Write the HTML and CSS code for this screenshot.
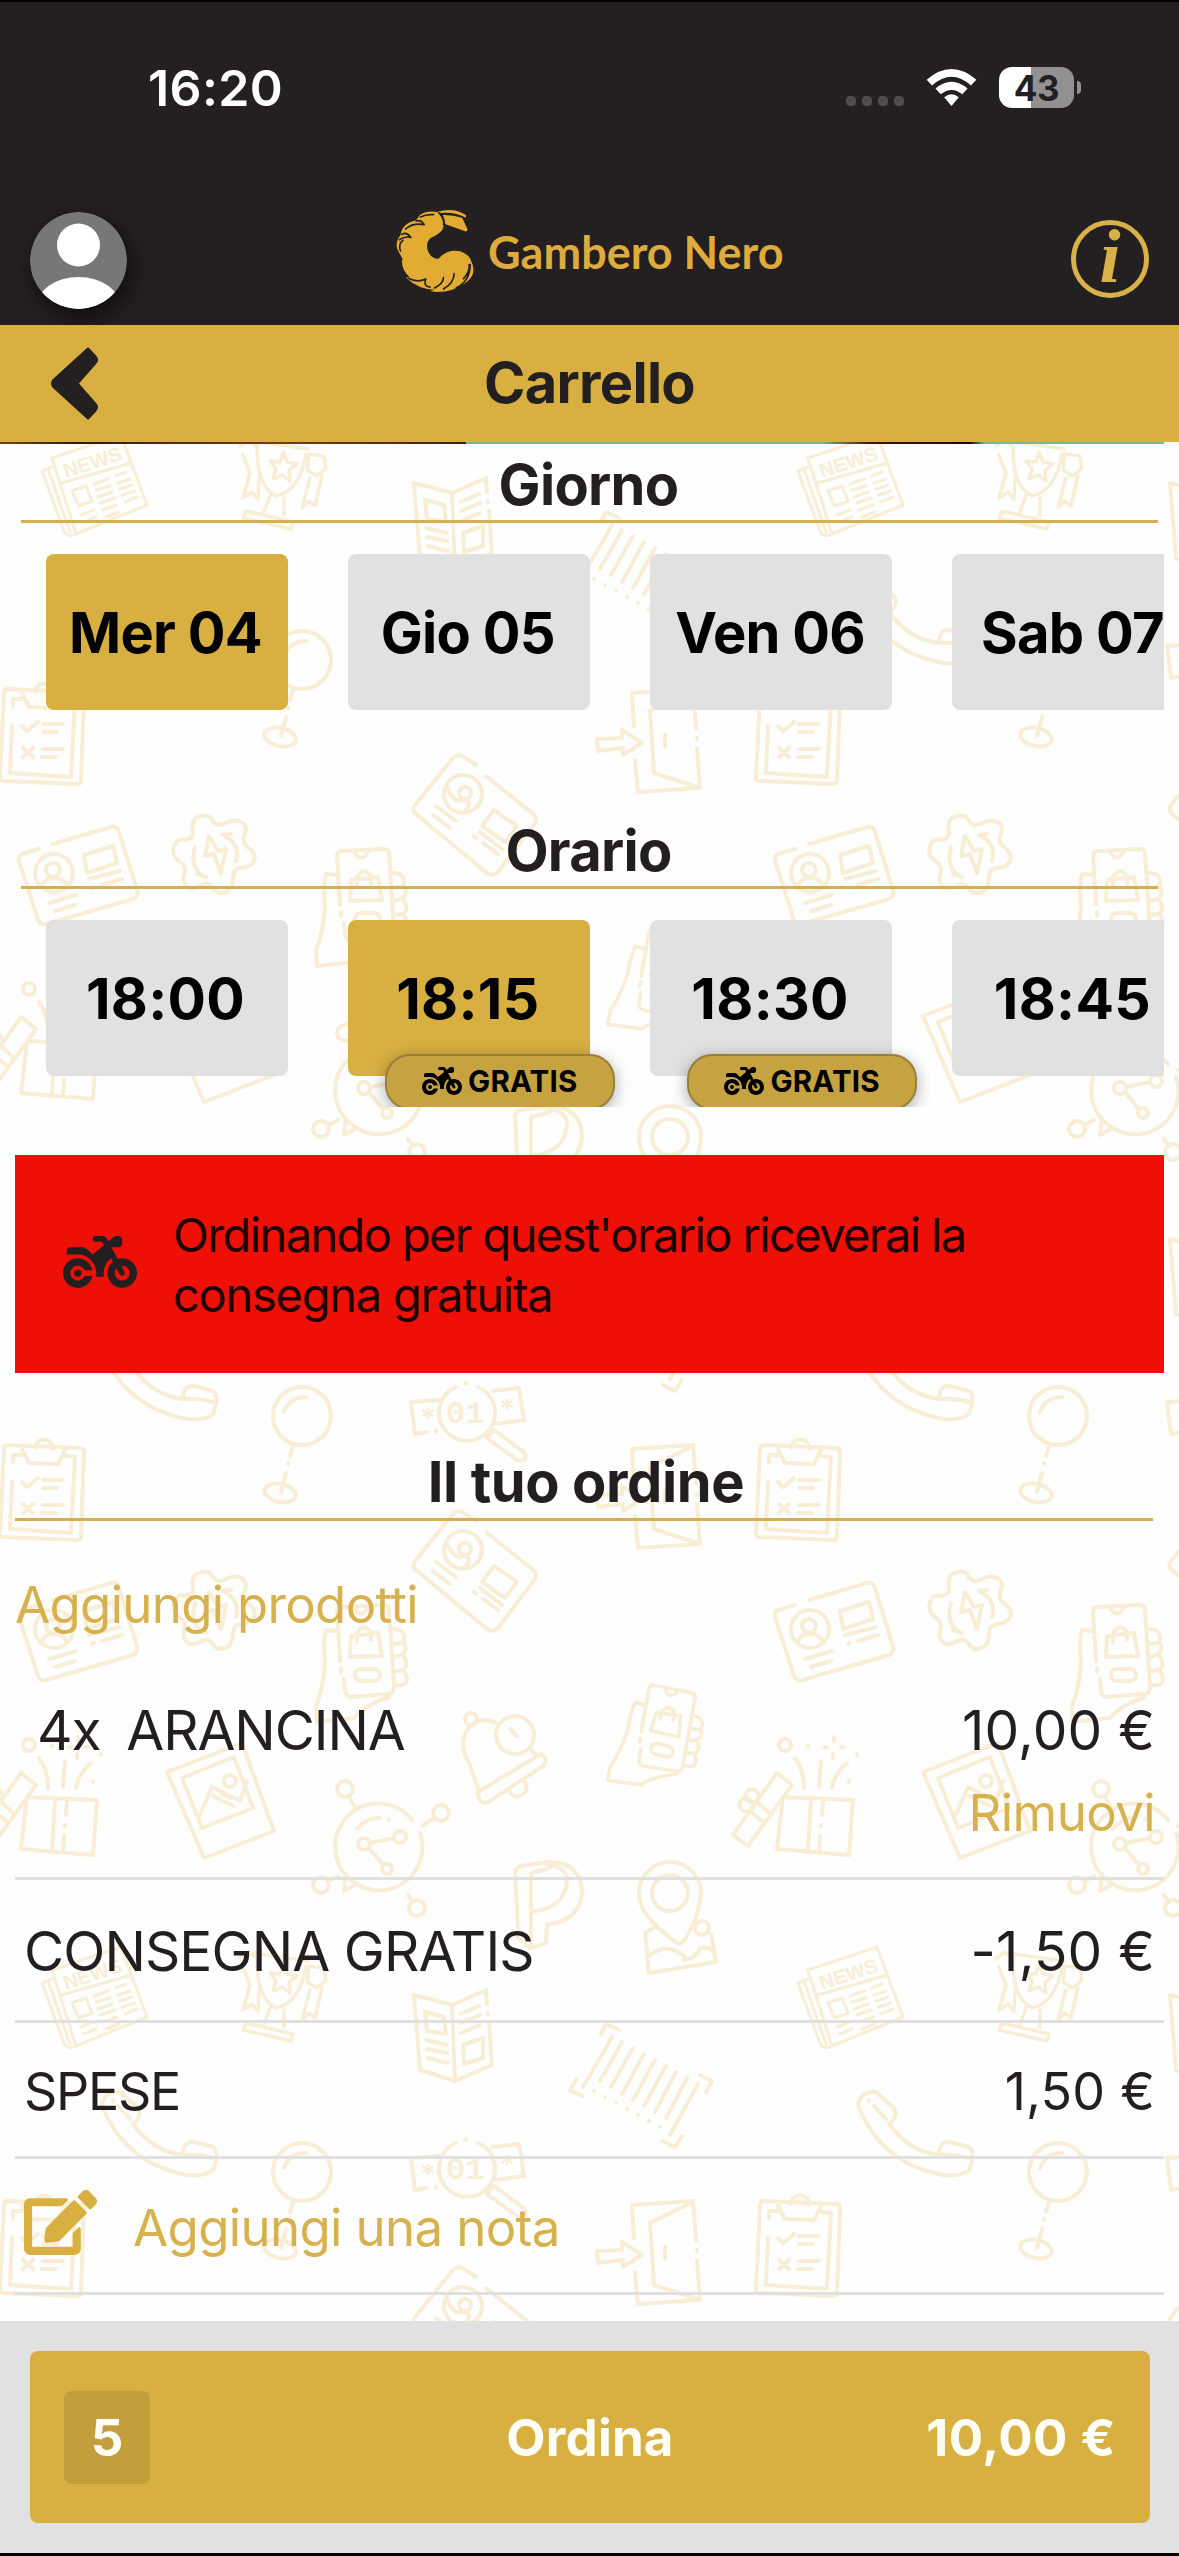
FILE: index.html
```html
<!DOCTYPE html>
<html lang="it">
<head>
<meta charset="utf-8">
<title>Gambero Nero - Carrello</title>
<link rel="stylesheet" href="styles.css">
</head>
<body>
<svg class="defs" width="0" height="0" aria-hidden="true">
  <defs>
    <symbol id="moto" viewBox="0 32 640 448"><path d="M280 32c-13.300 0-24 10.700-24 24s10.700 24 24 24h57.700l16.400 30.300L256 192l-45.300-45.300c-12-12-28.300-18.700-45.300-18.700H64c-17.700 0-32 14.300-32 32v32h96c88.400 0 160 71.600 160 160c0 11-1.100 21.700-3.200 32h70.400c-2.100-10.300-3.200-21-3.200-32c0-52.200 25-98.600 63.700-127.800l15.400 28.600C402.400 276.300 384 312 384 352c0 70.700 57.300 128 128 128s128-57.300 128-128s-57.300-128-128-128c-13.500 0-26.500 2.100-38.700 6L418.200 128H480c17.700 0 32-14.300 32-32V64c0-17.700-14.300-32-32-32H459.600c-7.500 0-14.700 2.600-20.500 7.400L391.700 78.900l-14-26c-7-12.900-20.500-21-35.200-21H280zM462.700 311.200l28.200 52.200c6.300 11.700 20.900 16 32.500 9.700s16-20.900 9.700-32.500l-28.200-52.200c2.300-.3 4.700-.4 7.100-.4c35.300 0 64 28.700 64 64s-28.700 64-64 64s-64-28.700-64-64c0-15.500 5.500-29.700 14.700-40.800zM187.300 376c-9.500 23.500-32.500 40-59.300 40c-35.300 0-64-28.700-64-64s28.700-64 64-64c26.900 0 49.900 16.500 59.300 40h66.400C242.500 268.800 190.500 224 128 224C57.300 224 0 281.300 0 352s57.300 128 128 128c62.500 0 114.500-44.800 125.800-104H187.300zM128 384a32 32 0 1 0 0-64 32 32 0 1 0 0 64z"/></symbol>
  </defs>
</svg>
<div class="app">
  <header class="top">
    <div class="status">
      <span class="time">16:20</span>
      <div class="status-icons">
        <span class="dots"><i></i><i></i><i></i><i></i></span>
        <svg class="wifi" viewBox="0 0 51 38"><path fill="#fff" d="M0 11Q25.500-11 51 11L45.500 17Q25.500-1 5.500 17ZM9 20Q25.500 6 42 20L36.500 26Q25.500 17 14.500 26ZM18 29Q25.500 23 33 29L25.500 38Z"/></svg>
        <span class="battery">43</span>
        <i class="tip"></i>
      </div>
    </div>
    <div class="brand-row">
      <svg class="avatar" viewBox="0 0 97 97"><defs><clipPath id="av"><circle cx="48.500" cy="48.500" r="48.500"/></clipPath></defs><g clip-path="url(#av)"><rect width="97" height="97" fill="#777"/><circle cx="48.500" cy="33" r="21.500" fill="#fff"/><ellipse cx="48.500" cy="95" rx="42" ry="30" fill="#fff"/></g></svg>
      <div class="logo">
        <svg class="shrimp" viewBox="45 55 245 255">
          <g fill="#e2ac33">
            <path d="M172 66Q222 52 258 77L257 84Q222 66 184 70Z"/>
            <path d="M188 76Q216 75 246 84L262 119Q262 127 255 125L196 104Q193 88 188 76Z"/>
            <path d="M119 76Q140 62 172 67Q198 96 187 120Q176 134 150 146Q134 163 145 188Q155 208 175 207Q203 176 240 185Q268 195 272 212Q292 250 262 275Q245 290 216 300Q180 312 150 304L163 300Q118 300 77 264L88 262Q60 235 67 207L54 184Q44 165 55 145L61 137Q65 101 108 92Z"/>
          </g>
          <g fill="none" stroke="#241f20" stroke-width="5" stroke-linecap="round">
            <path d="M121 82Q138 73 160 75M177 70Q194 86 190 105M76 118Q98 98 132 105M108 94Q122 89 132 105M58 150Q72 139 92 143M61 184Q54 163 68 152M65 134Q79 125 92 143M84 266Q112 280 137 268M163 295Q190 282 190 263M190 298Q221 280 222 252M229 294Q269 275 270 225M250 267Q269 248 267 225M136 271Q130 290 150 292"/>
          </g>
        </svg>
        <span class="logo-text">Gambero Nero</span>
      </div>
      <span class="info">i</span>
    </div>
  </header>
  <div class="title-bar">
    <svg class="back" viewBox="50 347 50 75"><path d="M88 350L95 357.500Q98 361 95 364L77 384.500L95 405Q98 408 95 411.500L88 419L54 388Q51 384.500 54 381Z" fill="#241f20" stroke="#241f20" stroke-width="3" stroke-linejoin="round"/></svg>
    <h1>Carrello</h1>
  </div>
  <main>
    <svg class="wallpaper" viewBox="0 442 1179 1879" aria-hidden="true">
      <defs>
        <g id="hand">
          <path d="M1096 1661L1093 1612Q1093 1607 1098 1607L1140 1605Q1145 1605 1145 1610L1150 1686Q1150 1694 1144 1694L1107 1697Q1102 1697 1101 1690L1100 1679M1097 1668v4M1110 1607Q1117 1621 1125 1606M1107 1636L1134 1633L1138 1656L1106 1657ZM1113 1642V1633Q1120 1622 1127 1632V1640M1093 1631L1082 1630Q1079 1640 1081 1663Q1079 1690 1072 1706L1073 1722L1110 1718Q1120 1706 1145 1697"/>
          <rect x="1111" y="1669" width="25" height="12" rx="6"/>
          <path d="M1147 1629Q1161 1628 1160 1640Q1157 1645 1149 1643M1160 1642Q1166 1655 1149 1657M1160 1657Q1168 1671 1150 1671M1160 1671Q1169 1687 1151 1685"/>
        </g>
        <g id="motifs" fill="none" stroke="#f8eed6" stroke-width="4" stroke-linecap="round" stroke-linejoin="round">
          <path d="M7 1445L80 1448Q84 1448 84 1452L81 1537Q81 1540 77 1540L3 1537Q0 1537 0 1534L4 1449Q4 1445 7 1445M13 1462V1455L22 1455M66 1456L75 1457L71 1533L10 1529L12 1482M22 1449L29 1463L58 1464L65 1450M35 1448A9 9 0 0 1 53 1449M22 1482L27 1487L38 1478M43 1480H63M43 1488H57M23 1504L33 1513M33 1504L23 1513M43 1505H63M42 1513H56"/>
          <circle cx="302" cy="1416" r="29"/>
          <path d="M284 1412Q290 1397 306 1397M293 1446L290 1456M288 1463v1M286 1473L281 1492"/>
          <ellipse cx="280" cy="1493" rx="16" ry="9" transform="rotate(12 280 1493)"/>
          <path d="M456 1387A28 28 0 1 0 478 1387M466 1383v1M439 1400L411 1402L415 1434L427 1432M436 1431v1M493 1391L519 1388L524 1420L495 1424M487 1438L517 1460Q528 1463 525 1453L494 1430Z"/>
          <text x="446" y="1423" class="motif-num">01</text>
          <text x="421" y="1426" class="motif-star">*</text>
          <text x="500" y="1417" class="motif-star">*</text>
          <path d="M476 1521L464 1513Q458 1509 453 1514L415 1561Q411 1567 417 1571L487 1629Q493 1633 498 1628L535 1579Q538 1573 532 1569L486 1532M436 1562L456 1577M433 1571L450 1584M494 1566L517 1582L505 1598L482 1582ZM480 1588L502 1605M474 1592L476 1594M483 1599L498 1610M447 1544Q454 1560 464 1556Q474 1558 464 1568"/>
          <circle cx="463" cy="1550" r="19"/><circle cx="465" cy="1549" r="6"/>
          <path d="M795 1605L778 1610Q774 1612 775 1617L794 1676Q797 1682 802 1680L889 1655Q895 1652 893 1646L875 1588Q873 1581 867 1583L809 1600M840 1611L869 1602L873 1619L843 1629ZM845 1635L876 1627M848 1644L850 1643M858 1641L878 1635M805 1659L832 1651M811 1667L831 1661M797 1643Q801 1633 811 1634Q820 1634 823 1642"/>
          <circle cx="810" cy="1629" r="19"/><circle cx="809" cy="1626" r="7"/>
          <path d="M952 1574Q965 1568 969 1577Q973 1583 980 1580Q992 1573 1000 1580Q1004 1585 1000 1592Q998 1600 1005 1604Q1014 1611 1009 1619Q1005 1624 996 1624Q988 1626 989 1636Q987 1649 977 1649Q971 1649 968 1643Q963 1637 956 1642Q946 1647 941 1640Q938 1635 941 1628Q942 1621 935 1617Q926 1610 931 1600Q934 1594 941 1596Q950 1595 949 1587Q947 1579 952 1574ZM965 1592L961 1612L970 1610L977 1629L982 1605L974 1607ZM951 1603Q945 1624 961 1633M953 1630L962 1633M979 1591Q997 1600 992 1617M979 1591L987 1590"/>
          <use href="#hand"/>
          <use href="#hand" transform="translate(666 1729) rotate(14) scale(.9) translate(-1122 -1651)"/>
          <path d="M783 1797L853 1800L849 1855L777 1849ZM811 1799L808 1851M823 1801L822 1815M821 1825v1M820 1836L819 1852M777 1773L792 1785L748 1846L733 1835ZM757 1802L769 1813M750 1811L762 1821M795 1758Q804 1770 804 1788M821 1761L819 1787M847 1763Q834 1774 832 1788M808 1745v1M857 1754v1M849 1781v1M834 1737v4M833 1754v4M824 1747h3M841 1747h3"/>
          <circle cx="785" cy="1745" r="6"/><circle cx="752" cy="1796" r="6.500"/><circle cx="746" cy="1805" r="6.500"/>
          <path d="M167 1772L242 1743L274 1831L204 1858ZM182 1778L234 1757L253 1808L202 1828ZM199 1817L212 1787L240 1801L247 1781M213 1796L234 1806M222 1794L231 1798"/>
          <circle cx="230" cy="1781" r="6"/>
          <path d="M412 1820A43 43 0 1 0 357 1884L344 1891L346 1874M420 1833A43 43 0 0 1 357 1884M357 1829Q367 1817 380 1818M389 1819v1M370 1843L394 1838M369 1848L383 1865M348 1796L356 1808M434 1818L422 1826M329 1881L338 1876M408 1895L413 1902"/>
          <circle cx="364" cy="1844" r="6"/><circle cx="400" cy="1837" r="6"/><circle cx="387" cy="1869" r="5"/><circle cx="345" cy="1789" r="8"/><circle cx="441" cy="1813" r="8"/><circle cx="321" cy="1885" r="8"/><circle cx="417" cy="1908" r="8"/>
          <path d="M497 1723Q478 1715 467 1730Q458 1745 469 1763L478 1788M530 1749L538 1756M478 1792L541 1754Q549 1758 543 1766L487 1803Q478 1804 478 1792M509 1791Q516 1802 526 1791Q528 1785 524 1780M510 1729L517 1736"/>
          <circle cx="515" cy="1735" r="19"/><circle cx="471" cy="1719" r="6"/>
          <path d="M518 1930L515 1872Q515 1867 521 1866L547 1862Q582 1862 582 1893Q580 1920 547 1925L546 1943L531 1948L531 1873L550 1868M531 1912Q566 1908 567 1880Q566 1866 545 1864M530 1948L516 1936"/>
          <path d="M677 1943Q638 1915 639 1893A31 31 0 0 1 701 1893Q700 1915 686 1938Q682 1945 677 1943M655 1927L645 1933L649 1973L716 1962L711 1934M647 1958Q665 1940 685 1957M683 1960Q697 1958 700 1948Q710 1946 715 1955"/>
          <circle cx="670" cy="1893" r="18"/><circle cx="702" cy="1928" r="7"/>
          <g transform="translate(0 -756)">
            <path stroke-width="3" d="M808 1970L877 1947L903 2017L832 2046ZM808 1979L798 1983L820 2043Q823 2050 832 2046M804 1981L826 2044M818 1995L887 1975M828 2003L842 1998L848 2013L835 2018ZM850 1996L864 1991M852 2002L866 1998M854 2009L868 2004M857 2015L871 2010M837 2027L850 2022M840 2034L852 2029M859 2022L873 2017M862 2029L875 2024M872 1988L882 1984M874 1995L886 1991M876 2001L888 1997M878 2007L891 2003M881 2014L893 2009"/>
            <text x="822" y="1990" transform="rotate(-18 822 1990)" class="motif-news">NEWS</text>
            <path stroke-width="3.500" d="M257 1957Q256 1998 276 2008Q300 2003 306 1966M252 1953L308 1961M283 1964L287 1974L297 1976L289 1982L290 1993L282 1987L273 1991L276 1981L270 1973L280 1974ZM270 2008L264 2024M284 2010L284 2027M246 2023L293 2034L291 2041L243 2030ZM243 1967L250 1985L243 2010L252 2004L258 2011L259 1990M240 1958L249 1952L258 1960M324 1968L309 1966L307 1982L317 1988L326 1980ZM310 1990L302 2020L309 2013L315 2018L322 1988"/>
            <path d="M414 1995L452 2005L486 1990L487 2004M488 2013v1M489 2023L492 2065L455 2081L420 2070L414 1995M452 2005L455 2081M425 2012L444 2017L446 2034L427 2031ZM426 2040L447 2045M427 2049L447 2053M428 2058L448 2063M461 2014L479 2006M461 2023L480 2015M461 2033L480 2025M463 2045L483 2038V2058L464 2064Z"/>
            <path d="M612 2037L583 2087M622 2042L600 2081M633 2048L611 2087M644 2054L622 2094M655 2060L633 2100M666 2066L644 2106M676 2072L655 2112M687 2078L666 2118M698 2084L670 2135M601 2034L606 2024L619 2030M576 2080L570 2090L582 2096M700 2075L712 2081L706 2092M682 2136L675 2147L663 2141"/>
            <path stroke-dasharray="0.100 12.400" d="M594 2091L662 2128"/>
            <path d="M858 2105Q860 2091 876 2092L894 2108Q899 2116 889 2124Q908 2151 939 2155Q939 2141 950 2142L969 2147Q976 2152 969 2170Q960 2177 943 2175Q880 2163 858 2105M874 2106L886 2119M869 2100v1M940 2155Q955 2154 969 2158"/>
            <path d="M634 2238L632 2205L693 2201L696 2240M697 2250v1M697 2260L700 2300L638 2304L635 2272M693 2202L650 2223L654 2285L700 2300M665 2247V2259M597 2251L622 2250V2242L642 2255L623 2267V2260L598 2263Z"/>
          </g>
        </g>
        <g id="motif-row"><use href="#motifs" x="-756"/><use href="#motifs"/><use href="#motifs" x="756"/></g>
      </defs>
      <use href="#motif-row" y="-756"/><use href="#motif-row"/><use href="#motif-row" y="756"/>
    </svg>
    <div class="banner-edge"></div>
    <section class="slots">
      <h2>Giorno</h2>
      <div class="scroller">
        <div class="slot on">Mer 04</div>
        <div class="slot">Gio 05</div>
        <div class="slot">Ven 06</div>
        <div class="slot">Sab 07</div>
      </div>
    </section>
    <section class="slots hours">
      <h2>Orario</h2>
      <div class="scroller">
        <div class="slot">18:00</div>
        <div class="slot on">18:15<span class="free"><svg><use href="#moto"/></svg>GRATIS</span></div>
        <div class="slot">18:30<span class="free"><svg><use href="#moto"/></svg>GRATIS</span></div>
        <div class="slot">18:45</div>
      </div>
    </section>
    <div class="notice">
      <svg><use href="#moto"/></svg>
      <p>Ordinando per quest'orario riceverai la<br><span class="second">consegna gratuita</span></p>
    </div>
    <section class="order">
      <h2>Il tuo ordine</h2>
      <a class="add">Aggiungi prodotti</a>
      <div class="item">
        <div class="line"><span class="name"><span class="qty">4x</span><span>ARANCINA</span></span><span class="amount">10,00 €</span></div>
        <a class="remove">Rimuovi</a>
      </div>
      <div class="row delivery"><span class="name">CONSEGNA GRATIS</span><span class="amount">-1,50 €</span></div>
      <div class="row fees"><span class="name">SPESE</span><span class="amount">1,50 €</span></div>
      <div class="row note">
        <svg viewBox="0 0 576 512"><path d="M402.600 83.200l90.200 90.200c3.800 3.800 3.800 10 0 13.800L274.400 405.600l-92.800 10.300c-12.400 1.400-22.900-9.100-21.500-21.500l10.300-92.800L388.800 83.200c3.800-3.800 10-3.800 13.800 0zm162-22.900l-48.800-48.800c-15.200-15.200-39.900-15.200-55.200 0l-35.400 35.400c-3.800 3.800-3.800 10 0 13.800l90.200 90.200c3.800 3.800 10 3.800 13.800 0l35.400-35.400c15.200-15.300 15.200-40 0-55.200zM384 346.200V448H64V128h229.800c3.200 0 6.200-1.300 8.500-3.500l40-40c7.600-7.600 2.200-20.500-8.500-20.500H48C21.500 64 0 85.500 0 112v352c0 26.500 21.500 48 48 48h352c26.500 0 48-21.500 48-48V306.200c0-10.700-12.900-16-20.500-8.500l-40 40c-2.200 2.300-3.500 5.300-3.500 8.500z"/></svg>
        <span>Aggiungi una nota</span>
      </div>
    </section>
  </main>
  <footer>
    <div class="checkout">
      <span class="count">5</span>
      <span class="label">Ordina</span>
      <span class="total">10,00 €</span>
    </div>
  </footer>
</div>
</body>
</html>
```
FILE: styles.css
```css
* { box-sizing: border-box; margin: 0; padding: 0; }
body { width: 1179px; height: 2556px; overflow: hidden; background: #fff; font-family: Inter, "Liberation Sans", sans-serif; color: #231f20; }
.defs { position: absolute; }
.app { display: flex; flex-direction: column; width: 1179px; height: 2556px; }

.top { height: 325px; background: #241f20; border-top: 2px solid #000; }
.status { height: 170px; padding: 0 98px 0 148px; display: flex; justify-content: space-between; }
.time { color: #fff; font-size: 50px; font-weight: 600; line-height: 60px; margin-top: 56px; letter-spacing: .4px; }
.status-icons { display: flex; align-items: flex-start; padding-top: 65px; }
.dots { display: flex; gap: 6px; padding-top: 29px; margin-right: 22px; }
.dots i { width: 10px; height: 10px; border-radius: 4px; background: #4f4c4c; }
.wifi { width: 51px; height: 37px; margin: 2px 22px 0 0; }
.battery { width: 75px; height: 41px; border-radius: 13px; background: linear-gradient(90deg, #fff 32px, #929091 32px); color: #241f20; font-size: 35px; font-weight: 700; line-height: 42px; text-align: center; letter-spacing: -.5px; }
.tip { width: 4px; height: 13px; margin: 14px 0 0 3px; border-radius: 0 4px 4px 0; background: #929091; }
.brand-row { height: 153px; display: flex; align-items: flex-start; padding-left: 30px; }
.avatar { width: 97px; height: 97px; margin-top: 40px; border-radius: 50%; box-shadow: 4px 8px 22px rgba(0, 0, 0, .6); }
.logo { display: flex; margin: 36px 0 0 268px; }
.shrimp { width: 82px; height: 85px; }
.logo-text { margin-left: 11px; width: 307px; font: 700 45px/60px Lato, sans-serif; color: #deab3e; margin-top: 14px; white-space: nowrap; }
.info { width: 78px; height: 78px; margin: 48px 0 0 276px; border: 5.500px solid #d8b14b; border-radius: 50%; color: #d8b14b; font: italic 700 76px/62px "Liberation Serif", serif; text-align: center; }

.title-bar { height: 117px; background: #d8b042; display: grid; grid-template-columns: 150px 1fr 150px; align-items: center; }
.back { width: 50px; height: 75px; margin-left: 50px; }
h1 { font-size: 56px; font-weight: 700; text-align: center; line-height: 70px; letter-spacing: -.700px; margin-top: -2px; }

main { flex: none; position: relative; height: 1879px; overflow: hidden; background: #fefefe; }
.wallpaper { position: absolute; left: 0; top: 0; width: 1179px; height: 1879px; }
.motif-num { font: 700 32px "Liberation Mono", monospace; fill: #f8eed6; stroke: none; }
.motif-star { font: 700 28px "Liberation Serif", serif; fill: #f8eed6; stroke: none; }
.motif-news { font: 700 20px "Liberation Sans", sans-serif; fill: #f8eed6; stroke: none; }
.banner-edge, .slots, .notice, .order { position: relative; }
.banner-edge { width: 1164px; height: 2px; background: linear-gradient(90deg, #6b4420 0, #2b1a10 80px, #7a3a1c 280px, #3a210f 466px, #76b5a4 466px, #76b5a4 820px, #40140c 870px, #200505 970px, #76b5a4 985px); }
h2 { height: 79px; padding-top: 7px; border-bottom: 3px solid #d3b052; font-size: 56px; font-weight: 700; line-height: 68px; text-align: center; letter-spacing: -.700px; }
.slots h2 { margin: 0 21px; padding-right: 2px; }
.scroller { display: flex; gap: 60.300px; margin: 31px 15px 0 0; padding-left: 45.500px; overflow: hidden; }
.slot { flex: none; position: relative; width: 242px; height: 156px; border-radius: 8px; background: #e1e1e1; color: #000; font-size: 56px; font-weight: 700; line-height: 158px; text-align: center; white-space: nowrap; letter-spacing: -.700px; text-indent: -2px; }
.slot.on, .checkout { background: #d8b042; }
.hours { margin-top: 99.500px; }
.hours .slot { font-size: 57px; letter-spacing: .3px; }
.hours .scroller { height: 187.500px; }
.free { position: absolute; left: 37px; top: 134px; width: 230px; height: 56px; display: flex; align-items: center; justify-content: center; gap: 6px; border: 2px solid #97803a; border-radius: 25px; background: #c7a240; box-shadow: 0 4px 16px rgba(0, 0, 0, .35); font-size: 29.500px; line-height: 50px; font-weight: 700; padding-bottom: 2px; letter-spacing: .2px; text-indent: 0; }
.free svg { width: 40px; height: 28px; fill: #000; }
.notice { height: 218px; margin: 48px 15px 0; padding: 50px 0 0 48px; display: flex; gap: 36px; background: #ee0f06; color: #1c0302; }
.notice svg { width: 74px; height: 52px; margin-top: 31px; fill: #231f20; }
.notice p { font-size: 47px; line-height: 60px; white-space: nowrap; letter-spacing: -1.620px; }
.notice .second { letter-spacing: -1.250px; }

.order { margin: 69px 15px 0; }
.order h2 { margin-right: 11px; padding: 6px 0 0 4px; letter-spacing: -.400px; }
.add { display: block; margin-top: 54px; font-size: 51px; line-height: 60px; letter-spacing: -.700px; }
.add, .remove, .note { color: #d8b14f; }
.item { height: 245px; padding: 60px 9px 0 22px; border-bottom: 3px solid #e0e0e0; }
.line, .row { display: flex; justify-content: space-between; align-items: center; }
.line { font-size: 55px; line-height: 70px; }
.name { letter-spacing: -1.100px; }
.amount { letter-spacing: .2px; }
.qty { margin-right: 26px; }
.remove { display: block; margin-top: 18px; font-size: 51px; line-height: 60px; text-align: right; letter-spacing: -.600px; }
.row { height: 136px; padding: 4px 9px 0 9px; border-bottom: 3px solid #e0e0e0; font-size: 51px; }
.delivery { height: 143px; padding-top: 1px; font-size: 55px; }
.delivery .name { letter-spacing: -.900px; }
.fees { font-size: 52px; }
.fees .name { letter-spacing: -1.300px; }
.note { justify-content: flex-start; gap: 36px; letter-spacing: -.650px; }
.note svg { width: 73px; height: 65px; margin-top: -10px; fill: #d8b042; }

footer { flex: none; height: 235px; padding: 30px 29px 0 30px; background: #e1e1e1; border-bottom: 3px solid #000; }
.checkout { height: 172px; border-radius: 8px; display: grid; grid-template-columns: 1fr 1fr 1fr; align-items: center; padding: 0 34px 0 34px; color: #fffff8; font-size: 51px; font-weight: 700; }
.count { width: 86px; height: 93px; border-radius: 8px; background: #c29f3c; line-height: 93px; text-align: center; }
.label { text-align: center; letter-spacing: .2px; }
.total { text-align: right; letter-spacing: .5px; }
```
